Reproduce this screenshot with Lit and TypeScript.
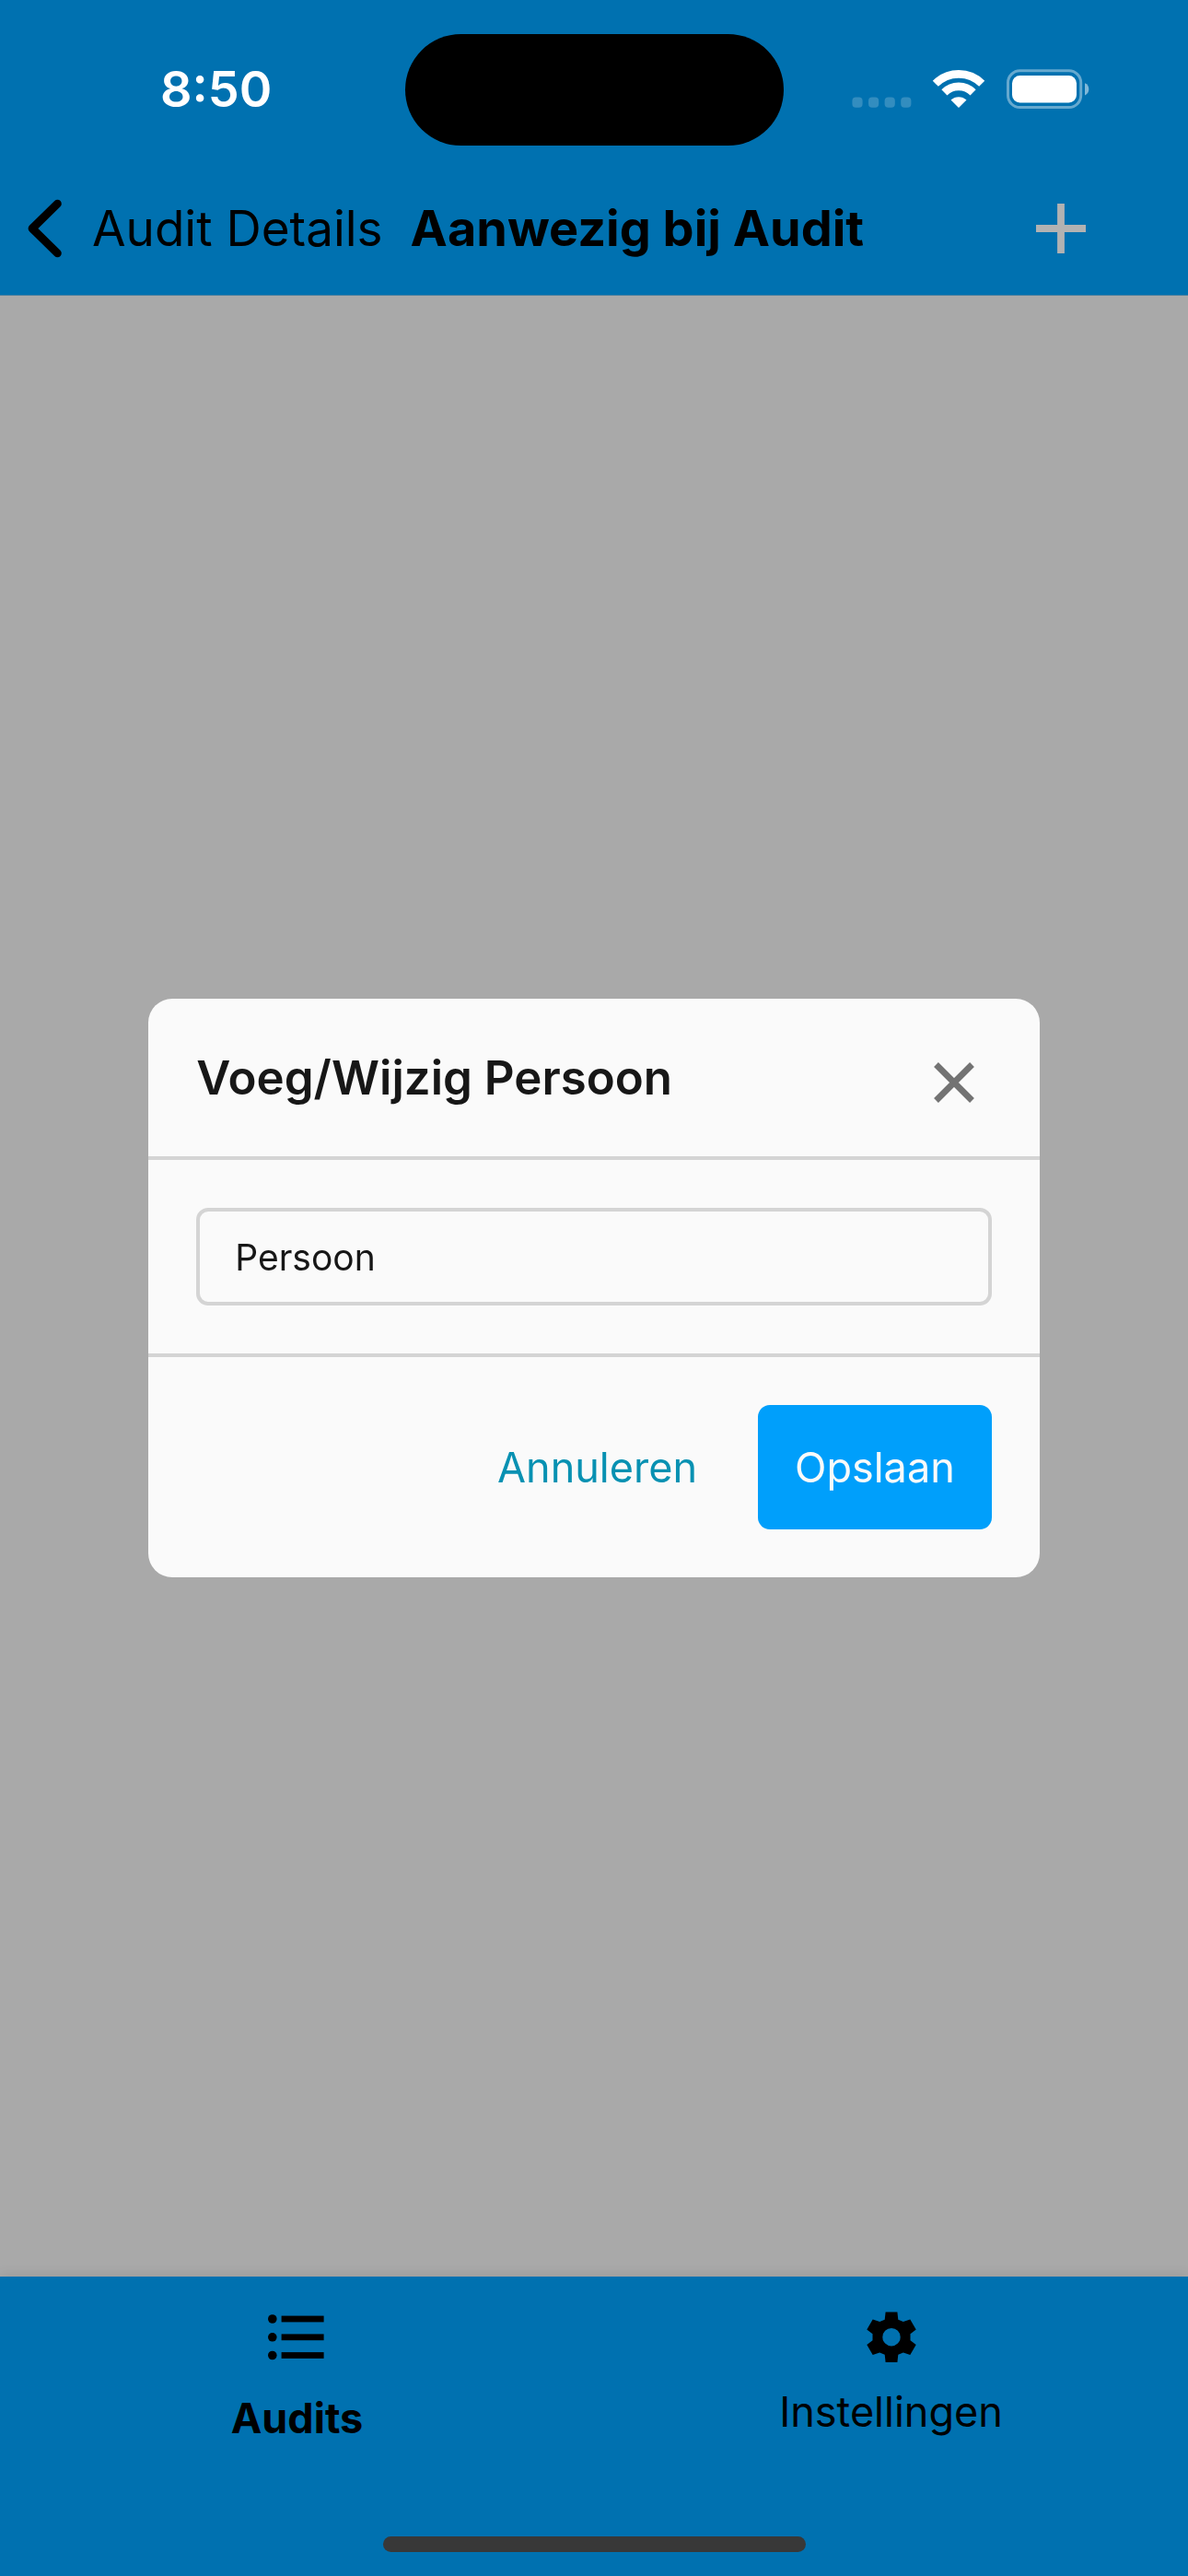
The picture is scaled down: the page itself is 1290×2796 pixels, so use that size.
import { LitElement, html, css, svg } from "lit";
import { customElement } from "lit/decorators.js";

@customElement("status-bar")
export class StatusBar extends LitElement {
  static styles = css`
    :host {
      display: grid;
      grid-template-columns: 1fr auto 1fr;
      align-items: center;
      height: 120px;
      padding-top: 37px;
    }
    .time {
      padding: 0 0 2px 174px;
      color: #fff;
      font-size: 54px;
      line-height: 64px;
      font-weight: 600;
    }
    .island {
      width: 411px;
      height: 121px;
      border-radius: 61px;
      background: #000;
    }
    .signals {
      display: flex;
      justify-content: flex-end;
      padding: 0 106px 2px 0;
    }
    svg {
      display: block;
    }
  `;

  render() {
    return html`
      <time class="time">8:50</time>
      <div class="island"></div>
      <div class="signals">
        <svg width="260" height="44" viewBox="0 0 260 44" aria-hidden="true">
          <g fill="#fff" fill-opacity=".2">
            ${[1.4, 19, 36.6, 54.2].map(
              (x) => svg`<rect x=${x} y="30.5" width="11.2" height="11.2" rx="4" />`,
            )}
          </g>
          <g fill="none" stroke="#fff" stroke-width="8.6">
            <path d="M91.8 15.8a35.6 35.6 0 0 1 50.4 0" />
            <path d="M101.4 25.4a22 22 0 0 1 31.2 0" />
          </g>
          <path d="M117 42l-8.5-8.5a12.5 12.5 0 0 1 17 0z" fill="#fff" />
          <rect x="170.5" y="1.8" width="79.2" height="39.8" rx="13" fill="none" stroke="#fff" stroke-opacity=".4" stroke-width="3" />
          <rect x="175" y="7" width="70" height="29.5" rx="8.5" fill="#fff" />
          <path d="M254 15.2v13.2a7.2 7.2 0 0 0 0-13.2z" fill="#fff" fill-opacity=".5" />
        </svg>
      </div>
    `;
  }
}

@customElement("nav-header")
export class NavHeader extends LitElement {
  static styles = css`
    :host {
      display: flex;
      align-items: center;
      height: 145px;
      padding: 18px 110px 0 30px;
      color: #000;
      font-size: 54px;
      line-height: 64px;
    }
    .back {
      display: flex;
      align-items: center;
      gap: 32px;
      color: inherit;
      font-size: 53px;
      text-decoration: none;
    }
    h1 {
      margin: 0 0 0 30px;
      font-size: inherit;
      font-weight: 700;
    }
    .add {
      margin-left: auto;
      padding: 0;
      border: 0;
      background: none;
    }
    svg {
      display: block;
    }
  `;

  render() {
    return html`
      <a class="back" href="#details">
        <svg width="38" height="64" viewBox="0 0 38 64" aria-hidden="true">
          <path d="M32.4 5.2L5 32l27.4 26.8" fill="none" stroke="#000" stroke-width="8.8" stroke-linecap="round" stroke-linejoin="round" />
        </svg>
        <span>Audit Details</span>
      </a>
      <h1>Aanwezig bij Audit</h1>
      <button class="add" aria-label="Persoon toevoegen">
        <svg width="56" height="56" viewBox="0 0 56 56" aria-hidden="true">
          <path d="M1 28h54M28 1v54" stroke="#b2b2b2" stroke-width="7.8" />
        </svg>
      </button>
    `;
  }
}

@customElement("person-dialog")
export class PersonDialog extends LitElement {
  static styles = css`
    :host {
      display: block;
      width: 75%;
    }
    .panel {
      border-radius: 26px;
      background: #fafafa;
      color: #171717;
      overflow: hidden;
    }
    .head {
      display: flex;
      align-items: center;
      justify-content: space-between;
      height: 171px;
      padding: 0 71px 0 52px;
      border-bottom: 4px solid #d4d4d4;
    }
    h2 {
      margin: 0;
      font-size: 51px;
      line-height: 60px;
      font-weight: 600;
    }
    button {
      font: inherit;
      border: 0;
      background: none;
    }
    .close {
      padding: 10px 0 0;
    }
    .close svg {
      display: block;
    }
    .body {
      padding: 52px;
    }
    input {
      display: block;
      box-sizing: border-box;
      width: 100%;
      height: 106px;
      padding: 0 38px;
      border: 4px solid #d4d4d4;
      border-radius: 13px;
      background: transparent;
      color: #171717;
      font: inherit;
      font-size: 39px;
      outline: none;
    }
    .actions {
      display: flex;
      justify-content: flex-end;
      gap: 26px;
      padding: 52px;
      border-top: 4px solid #d4d4d4;
    }
    .actions button {
      height: 135px;
      padding: 0 40px;
      border-radius: 13px;
      font-size: 45px;
      line-height: 56px;
    }
    .cancel {
      color: #0891b2;
    }
    .actions .save {
      background: #009ffb;
      color: #fafafa;
    }
  `;

  render() {
    return html`
      <form class="panel" role="dialog" aria-labelledby="title" @submit=${(e: Event) => e.preventDefault()}>
        <header class="head">
          <h2 id="title">Voeg/Wijzig Persoon</h2>
          <button class="close" type="button" aria-label="Sluiten">
            <svg width="44" height="44" viewBox="0 0 44 44" aria-hidden="true">
              <path d="M2.5 2.5l39 39M41.5 2.5l-39 39" stroke="#737373" stroke-width="6.8" />
            </svg>
          </button>
        </header>
        <div class="body">
          <input type="text" aria-label="Persoon" value="Persoon" />
        </div>
        <footer class="actions">
          <button class="cancel" type="button">Annuleren</button>
          <button class="save" type="submit">Opslaan</button>
        </footer>
      </form>
    `;
  }
}

const listIcon = svg`
  <g fill="#000">
    ${[12, 31.8, 51.5].map(
      (y) => svg`<circle cx="4.8" cy=${y} r="4.8" /><rect x="14.6" y=${y - 3.4} width="46" height="6.8" />`,
    )}
  </g>`;

const gearIcon = svg`
  <path fill="#000" fill-rule="evenodd" transform="translate(32 31.7)"
    d="M-6.4-27.3H6.4L7.3-19 12.8-16.7 20.3-19.3 26.7-8.3 20.5-3.5V3.5L26.7 8.3 20.3 19.3 12.8 16.7 7.3 19 6.4 27.3H-6.4L-7.3 19-12.8 16.7-20.3 19.3-26.7 8.3-20.5 3.5V-3.5L-26.7-8.3-20.3-19.3-12.8-16.7-7.3-19zM0-9.7a9.7 9.7 0 1 0 0 19.4 9.7 9.7 0 1 0 0-19.4z" />`;

@customElement("tab-bar")
export class TabBar extends LitElement {
  static styles = css`
    :host {
      display: block;
      background: #0071b0;
      box-shadow: 0 -3px 12px rgba(0, 0, 0, 0.08);
    }
    nav {
      display: grid;
      grid-template-columns: 1fr 1fr;
      height: 282px;
    }
    a {
      display: flex;
      flex-direction: column;
      align-items: center;
      gap: 21px;
      padding-top: 34px;
      color: #000;
      font-size: 45px;
      line-height: 56px;
      text-decoration: none;
    }
    a.active {
      gap: 28px;
      font-weight: 700;
    }
    svg {
      display: block;
    }
    .home {
      width: 459px;
      height: 17px;
      margin: 0 auto;
      border-radius: 9px;
      background: #383838;
    }
    .foot {
      padding-bottom: 26px;
    }
  `;

  render() {
    return html`
      <nav>
        <a class="active" href="#audits" aria-current="page">
          <svg width="64" height="64" viewBox="0 0 64 64" aria-hidden="true">${listIcon}</svg>
          <span>Audits</span>
        </a>
        <a href="#instellingen">
          <svg width="64" height="64" viewBox="0 0 64 64" aria-hidden="true">${gearIcon}</svg>
          <span>Instellingen</span>
        </a>
      </nav>
      <div class="foot"><div class="home"></div></div>
    `;
  }
}

@customElement("app-root")
export class AppRoot extends LitElement {
  static styles = css`
    :host {
      display: flex;
      flex-direction: column;
      min-height: 100vh;
      background: #a9a9a9;
      font-family: Inter, "Liberation Sans", sans-serif;
    }
    .top {
      background: #0071b0;
      border-bottom: 1px solid #4c7f9f;
    }
    main {
      flex: 1;
    }
    .overlay {
      position: fixed;
      inset: 0;
      display: flex;
      align-items: center;
      justify-content: center;
    }
  `;

  render() {
    return html`
      <header class="top">
        <status-bar></status-bar>
        <nav-header></nav-header>
      </header>
      <main></main>
      <tab-bar></tab-bar>
      <div class="overlay"><person-dialog></person-dialog></div>
    `;
  }
}
